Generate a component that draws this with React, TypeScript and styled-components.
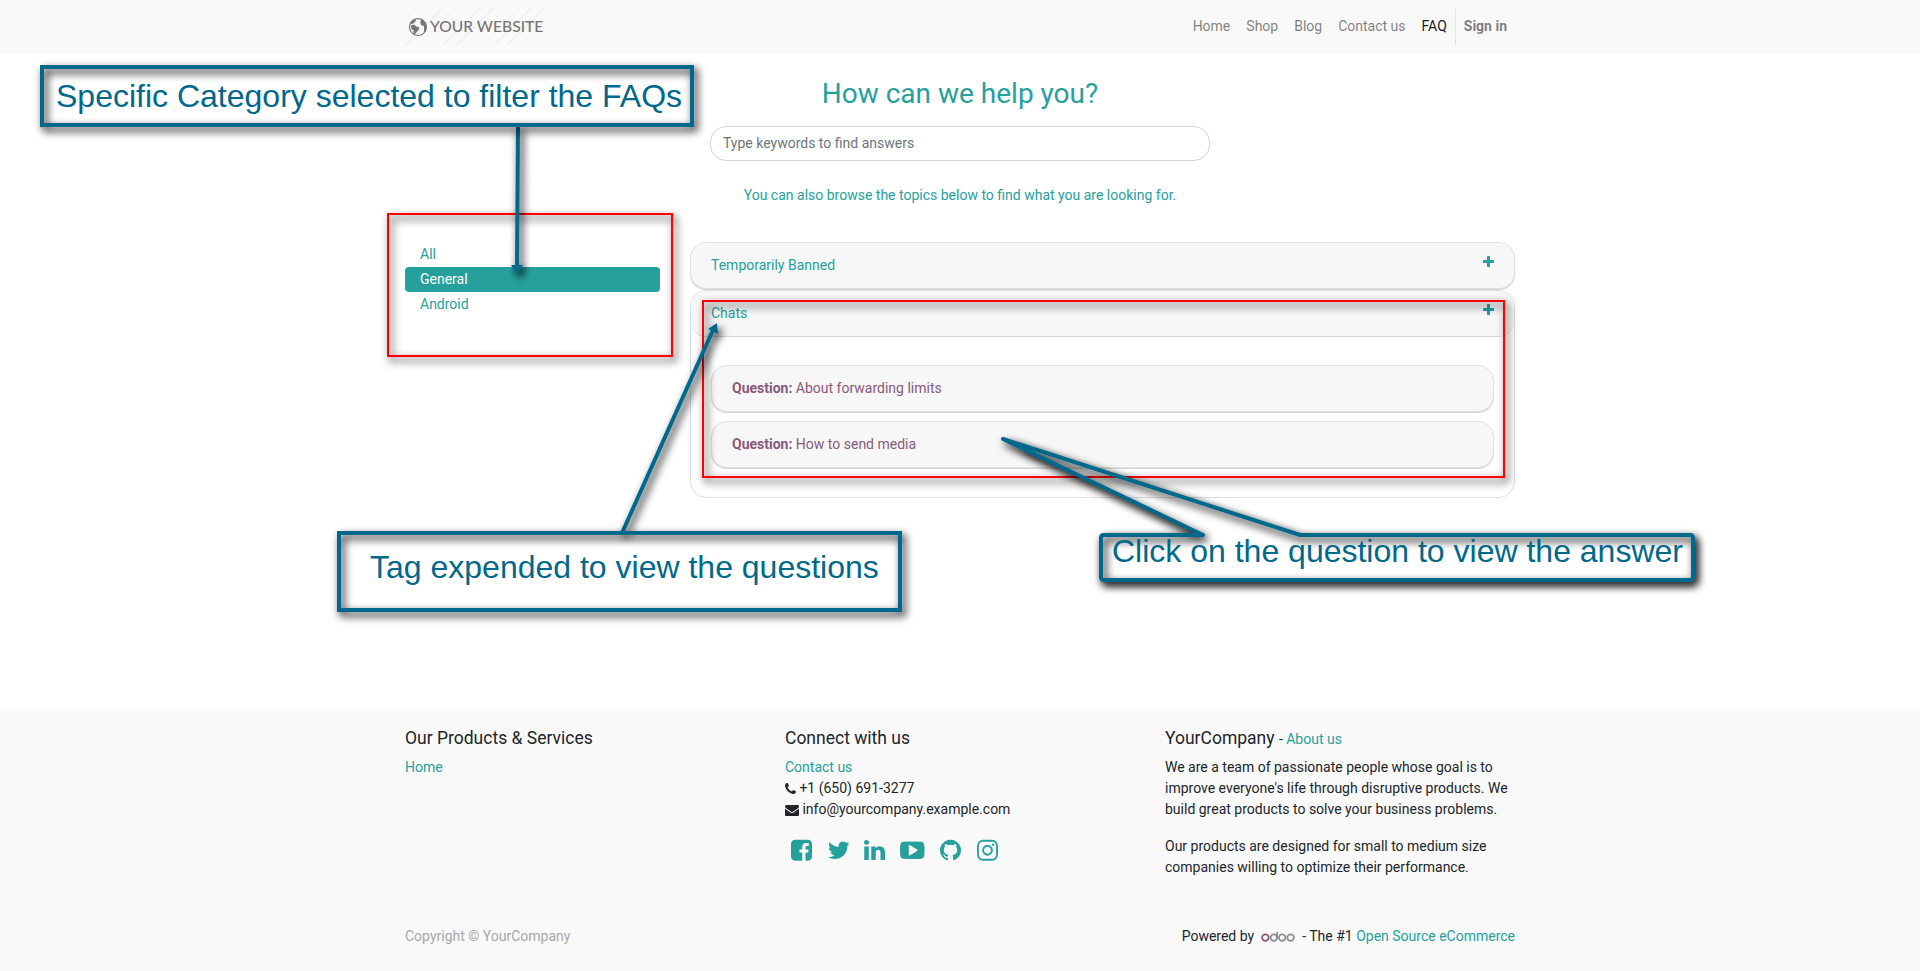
import React from "react";
import styled, { createGlobalStyle } from "styled-components";
import { ImEarth } from "react-icons/im";

const teal = "#26a09d";
const ink = "#00688b";

const GlobalStyle = createGlobalStyle`
  *, *::before, *::after { box-sizing: border-box; }
  body {
    margin: 0;
    background: #fff;
    color: #212529;
    font: 14px/21px Roboto, sans-serif;
  }
  a { color: ${teal}; text-decoration: none; }
  p { margin: 0; }
`;

const Page = styled.div`
  position: relative;
  width: 1920px;
  height: 971px;
  overflow: hidden;
  display: flex;
  flex-direction: column;
`;

const Container = styled.div`
  width: 1110px;
  margin: 0 auto;
`;

const Header = styled.header`
  height: 53px;
  background: #f9f9f9;
`;

const HeaderRow = styled(Container)`
  height: 53px;
  padding: 8px 0;
  display: flex;
  justify-content: space-between;
`;

const Logo = styled.a`
  display: flex;
  align-items: center;
  gap: 3px;
  width: 139px;
  height: 37px;
  padding-left: 4px;
  background: repeating-linear-gradient(
    135deg,
    transparent 0 8px,
    #f0f0f0 8px 9px
  );
  color: #757575;
  font: 500 15.6px/37px Lato, sans-serif;
  white-space: nowrap;
  svg { flex: none; }
`;

const Nav = styled.nav`
  display: flex;
`;

const NavLink = styled.a<{ $active?: boolean; $strong?: boolean }>`
  padding: 0 8px;
  line-height: 37px;
  color: ${(p) => (p.$active ? "rgba(0,0,0,.9)" : "rgba(0,0,0,.5)")};
  font-weight: ${(p) => (p.$strong ? 700 : 400)};
  border-left: ${(p) => (p.$strong ? "1px solid #e4e4e4" : "0")};
`;

const Main = styled.main`
  height: 658px;
  padding-top: 24px;
`;

const Hero = styled.section`
  display: flex;
  flex-direction: column;
  align-items: center;
  color: ${teal};
`;

const Title = styled.h2`
  margin: 0 0 15px;
  font-size: 28px;
  font-weight: 400;
  line-height: 34px;
`;

const Search = styled.input`
  width: 500px;
  height: 35px;
  margin-bottom: 24px;
  padding: 0 12px 2px;
  border: 1px solid #ced4da;
  border-radius: 16px;
  background: #fff;
  font: 14px/21px Roboto, sans-serif;
  &::placeholder { color: #6c757d; opacity: 1; }
`;

const Columns = styled(Container)`
  display: flex;
  align-items: flex-start;
  justify-content: space-between;
  margin-top: 36px;
`;

const Categories = styled.nav`
  display: flex;
  flex-direction: column;
  width: 255px;
`;

const Category = styled.a<{ $active?: boolean }>`
  height: 25px;
  padding: 0 15px;
  line-height: 24px;
  border-radius: 4px;
  color: ${(p) => (p.$active ? "#fff" : teal)};
  background: ${(p) => (p.$active ? teal : "transparent")};
`;

const Topics = styled.div`
  display: flex;
  flex-direction: column;
  gap: 1px;
  width: 825px;
`;

const Topic = styled.section<{ $open?: boolean }>`
  border: 1px solid #dfdfdf;
  border-radius: 16px;
  height: ${(p) => (p.$open ? "208px" : "47px")};
  background: ${(p) => (p.$open ? "#fff" : "#f7f7f7")};
  box-shadow: ${(p) => (p.$open ? "none" : "0 1px 1px rgba(0,0,0,.18)")};
`;

const TopicHead = styled.div<{ $open?: boolean }>`
  display: flex;
  justify-content: space-between;
  height: ${(p) => (p.$open ? "46px" : "45px")};
  padding: 12px 20px;
  border-radius: 15px;
  border-bottom: ${(p) => (p.$open ? "1px solid #d8d8d8" : "0")};
  background: #f7f7f7;
  color: ${teal};
`;

const Questions = styled.div`
  display: flex;
  flex-direction: column;
  gap: 9px;
  padding: 28px 20px;
`;

const Question = styled.div`
  height: 47px;
  padding: 12px 20px;
  border: 1px solid #dfdfdf;
  border-radius: 16px;
  background: #f7f7f7;
  box-shadow: 0 1px 1px rgba(0, 0, 0, 0.18);
  color: #875a7b;
`;

const Footer = styled.footer`
  flex: 1;
  background: #f9f9f9;
`;

const FooterGrid = styled(Container)`
  display: grid;
  grid-template-columns: 380px 380px 350px;
  height: 215px;
  padding-top: 17px;
`;

const FooterTitle = styled.h5`
  height: 21px;
  margin: 0 0 8px;
  font-size: 17.5px;
  font-weight: 400;
  line-height: 21px;
  small {
    font-size: 14px;
    line-height: 14px;
  }
`;

const Paragraph = styled.p`
  margin-bottom: 16px;
  white-space: nowrap;
`;

const Contact = styled.div`
  display: flex;
  align-items: center;
  gap: 3.4px;
  height: 21px;
`;

const Socials = styled.div`
  display: flex;
  align-items: center;
  margin-top: 18px;
  padding-left: 6px;
  color: ${teal};
`;

const Bottom = styled(Container)`
  display: flex;
  justify-content: space-between;
`;

const Copyright = styled.span`
  color: #a6a8aa;
`;

const Powered = styled.div`
  display: flex;
  align-items: center;
  white-space: pre;
`;

const Brand = styled.svg`
  margin: 0 7px 1px 7px;
`;

const Glyph = styled.svg<{ $after?: number }>`
  display: block;
  flex: none;
  fill: currentColor;
  margin-right: ${(p) => p.$after ?? 0}px;
`;

/* Annotation layer drawn over the page */
const Layer = styled.svg`
  position: absolute;
  inset: 0;
  pointer-events: none;
`;

const shadow = "drop-shadow(3px 4px 4.5px #000)";

const Frame = styled.div<{ $x: number; $y: number; $w: number; $h: number }>`
  position: absolute;
  left: ${(p) => p.$x}px;
  top: ${(p) => p.$y}px;
  width: ${(p) => p.$w}px;
  height: ${(p) => p.$h}px;
  border: 2px solid #f00;
  filter: ${shadow};
`;

const Note = styled.div<{ $x: number; $y: number; $w: number; $h: number; $pad: number; $line: number; $bare?: boolean }>`
  position: absolute;
  left: ${(p) => p.$x}px;
  top: ${(p) => p.$y}px;
  width: ${(p) => p.$w}px;
  height: ${(p) => p.$h}px;
  padding-left: ${(p) => p.$pad}px;
  color: ${ink};
  font: 32px/${(p) => p.$line}px "Liberation Sans", Arial, sans-serif;
  white-space: nowrap;
  &::before {
    content: "";
    position: absolute;
    inset: 0;
    border: ${(p) => (p.$bare ? "0" : `4px solid ${ink}`)};
    filter: ${shadow};
  }
`;

const glyphs = {
  plus: "M1600 736v192q0 40-28 68t-68 28h-416v416q0 40-28 68t-68 28h-192q-40 0-68-28t-28-68v-416h-416q-40 0-68-28t-28-68v-192q0-40 28-68t68-28h416v-416q0-40 28-68t68-28h192q40 0 68 28t28 68v416h416q40 0 68 28t28 68z",
  phone: "M1600 1240q0 27-10 70.5t-21 68.5q-21 50-122 106-94 51-186 51-27 0-53-3.5t-57.5-12.5-47-14.5-55.5-20.5-49-18q-98-35-175-83-127-79-264-216t-216-264q-48-77-83-175-3-9-18-49t-20.5-55.5-14.5-47-12.5-57.5-3.5-53q0-92 51-186 56-101 106-122 25-11 68.5-21t70.5-10q14 0 21 3 18 6 53 76 11 19 30 54t35 63.5 31 53.5q3 4 17.5 25t21.5 35.5 7 28.5q0 20-28.5 50t-62 55-62 53-28.5 46q0 9 5 22.5t8.5 20.5 14 24 11.5 19q76 137 174 235t235 174q2 1 19 11.5t24 14 20.5 8.5 22.5 5q18 0 46-28.5t53-62 55-62 50-28.5q14 0 28.5 7t35.5 21.5 25 17.5q25 15 53.5 31t63.5 35 54 30q70 35 76 53 3 7 3 21z",
  mail: "M1792 710v794q0 66-47 113t-113 47h-1472q-66 0-113-47t-47-113v-794q44 49 101 87 362 246 497 345 57 42 92.5 65.5t94.5 48 110 24.5h2q51 0 110-24.5t94.5-48 92.5-65.5q170-123 498-345 57-39 100-87zm0-294q0 79-49 151t-122 123q-376 261-468 325-10 7-42.5 31t-54 38.5-52 32.5-57.5 27-50 9h-2q-23 0-50-9t-57.5-27-52-32.5-54-38.5-42.5-31q-91-64-262-182.5t-205-142.5q-62-42-117-115.5t-55-136.5q0-78 41.5-130t118.5-52h1472q65 0 112.5 47t47.5 113z",
  facebook: "M1376 128q119 0 203.5 84.5t84.5 203.5v960q0 119-84.5 203.5t-203.5 84.5h-188v-595h199l30-232h-229v-148q0-56 23.5-84t91.5-28l122-1v-207q-63-9-178-9-136 0-217.5 80t-81.5 226v171h-200v232h200v595h-532q-119 0-203.5-84.5t-84.5-203.5v-960q0-119 84.5-203.5t203.5-84.5h960z",
  twitter: "M1684 408q-67 98-162 167 1 14 1 42 0 130-38 259.5t-115.5 248.5-184.5 210.5-258 146-323 54.5q-271 0-496-145 35 4 78 4 225 0 401-138-105-2-188-64.5t-114-159.5q33 5 61 5 43 0 85-11-112-23-185.5-111.5t-73.5-205.5v-4q68 38 146 41-66-44-105-115t-39-154q0-88 44-163 121 149 294.5 238.5t371.5 99.5q-8-38-8-74 0-134 94.5-228.5t228.5-94.5q140 0 236 102 109-21 205-78-37 115-142 178 93-10 186-50z",
  linkedin: "M477 625v991h-330v-991h330zm21-306q1 73-50.5 122t-135.5 49h-2q-82 0-132-49t-50-122q0-74 51.5-122.5t134.5-48.5 133 48.5 51 122.5zm1166 729v568h-329v-530q0-105-40.5-164.5t-126.5-59.5q-63 0-105.5 34.5t-63.5 85.5q-11 30-11 81v553h-329q2-399 2-647t-1-296l-1-48h329v144h-2q20-32 41-56t56.5-52 87-43.5 114.5-15.5q171 0 275 113.5t104 332.5z",
  youtube: "M1280 896q0-37-30-54l-512-320q-31-20-65-2-33 18-33 56v640q0 38 33 56 16 8 31 8 20 0 34-10l512-320q30-17 30-54zm512 0q0 96-1 150t-8.5 136.5-22.5 147.5q-16 73-69 123t-124 58q-222 25-671 25t-671-25q-71-8-124.5-58t-69.5-123q-14-65-21.5-147.5t-8.5-136.5-1-150 1-150 8.5-136.5 22.5-147.5q16-73 69-123t124-58q222-25 671-25t671 25q71 8 124.5 58t69.5 123q14 65 21.5 147.5t8.5 136.5 1 150z",
  github: "M896 128q209 0 385.5 103t279.5 279.5 103 385.5q0 251-146.5 451.5t-378.5 277.5q-27 5-40-7t-13-30q0-3 .5-76.5t.5-134.5q0-97-52-142 57-6 102.5-18t94-39 81-66.5 53-105 20.5-150.5q0-119-79-206 37-91-8-204-28-9-81 11t-92 44l-38 24q-93-26-192-26t-192 26q-16-11-42.5-27t-83.5-38.5-85-13.5q-45 113-8 204-79 87-79 206 0 85 20.5 150t52.5 105 80.5 67 94 39 102.5 18q-39 36-49 103-21 10-45 15t-57 5-65.5-21.5-55.5-62.5q-19-32-48.5-52t-49.5-24l-20-3q-21 0-29 4.5t-5 11.5 9 14 13 12l7 5q22 10 43.5 38t31.5 51l10 23q13 38 44 61.5t67 30 69.5 7 55.5-3.5l23-4q0 38 .5 88.5t.5 54.5q0 18-13 30t-40 7q-232-77-378.5-277.5t-146.5-451.5q0-209 103-385.5t279.5-279.5 385.5-103z",
  instagram: "M1152 896q0-106-75-181t-181-75-181 75-75 181 75 181 181 75 181-75 75-181zm138 0q0 164-115 279t-279 115-279-115-115-279 115-279 279-115 279 115 115 279zm108-410q0 38-27 65t-65 27-65-27-27-65 27-65 65-27 65 27 27 65zm-502-220q-7 0-76.5-.5t-105.5 0-96.5 3-103 10-71.5 18.5q-50 20-88 58t-58 88q-11 29-18.5 71.5t-10 103-3 96.5 0 105.5.5 76.5-.5 76.5 0 105.5 3 96.5 10 103 18.5 71.5q20 50 58 88t88 58q29 11 71.5 18.5t103 10 96.5 3 105.5 0 76.5-.5 76.5.5 105.5 0 96.5-3 103-10 71.5-18.5q50-20 88-58t58-88q11-29 18.5-71.5t10-103 3-96.5 0-105.5-.5-76.5.5-76.5 0-105.5-3-96.5-10-103-18.5-71.5q-20-50-58-88t-88-58q-29-11-71.5-18.5t-103-10-96.5-3-105.5 0-76.5.5zm768 630q0 229-5 317-10 208-124 322t-322 124q-88 5-317 5t-317-5q-208-10-322-124t-124-322q-5-88-5-317t5-317q10-208 124-322t322-124q88-5 317-5t317 5q208 10 322 124t124 322q5 88 5 317z",
};

/* Icons share a 1792-unit em; x and w trim the side bearings */
function Icon({ name, em, x = 0, w = 1792, after }: { name: keyof typeof glyphs; em: number; x?: number; w?: number; after?: number }) {
  return (
    <Glyph width={(w / 1792) * em} height={em} viewBox={`${x} 0 ${w} 1792`} $after={after}>
      <path d={glyphs[name]} />
    </Glyph>
  );
}

const socials: { name: keyof typeof glyphs; x: number; w: number; after: number }[] = [
  { name: "facebook", x: 128, w: 1536, after: 15.5 },
  { name: "twitter", x: 108, w: 1576, after: 15 },
  { name: "linkedin", x: 128, w: 1536, after: 15.3 },
  { name: "youtube", x: 0, w: 1792, after: 15.3 },
  { name: "github", x: 128, w: 1536, after: 15.5 },
  { name: "instagram", x: 128, w: 1536, after: 0 },
];

const balloon =
  "M1104 535H1203L1003 439L1300 535H1690q3 0 3 3V577q0 3-3 3H1104q-3 0-3-3V538q0-3 3-3z";

export default function App() {
  return (
    <Page>
      <GlobalStyle />
      <Header>
        <HeaderRow>
          <Logo>
            <ImEarth size={18} />
            YOUR WEBSITE
          </Logo>
          <Nav>
            <NavLink>Home</NavLink>
            <NavLink>Shop</NavLink>
            <NavLink>Blog</NavLink>
            <NavLink>Contact us</NavLink>
            <NavLink $active>FAQ</NavLink>
            <NavLink $strong>Sign in</NavLink>
          </Nav>
        </HeaderRow>
      </Header>

      <Main>
        <Hero>
          <Title>How can we help you?</Title>
          <Search placeholder="Type keywords to find answers" />
          <p>You can also browse the topics below to find what you are looking for.</p>
        </Hero>
        <Columns>
          <Categories>
            <Category>All</Category>
            <Category $active>General</Category>
            <Category>Android</Category>
          </Categories>
          <Topics>
            <Topic>
              <TopicHead>
                Temporarily Banned
                <Icon name="plus" em={14} x={192} w={1408} />
              </TopicHead>
            </Topic>
            <Topic $open>
              <TopicHead $open>
                Chats
                <Icon name="plus" em={14} x={192} w={1408} />
              </TopicHead>
              <Questions>
                <Question>
                  <b>Question:</b> About forwarding limits
                </Question>
                <Question>
                  <b>Question:</b> How to send media
                </Question>
              </Questions>
            </Topic>
          </Topics>
        </Columns>
      </Main>

      <Footer>
        <FooterGrid>
          <div>
            <FooterTitle>Our Products &amp; Services</FooterTitle>
            <a>Home</a>
          </div>
          <div>
            <FooterTitle>Connect with us</FooterTitle>
            <a>Contact us</a>
            <Contact>
              <Icon name="phone" em={14} x={192} w={1408} />
              +1 (650) 691-3277
            </Contact>
            <Contact>
              <Icon name="mail" em={14} />
              info@yourcompany.example.com
            </Contact>
            <Socials>
              {socials.map((s) => (
                <Icon key={s.name} em={24.5} {...s} />
              ))}
            </Socials>
          </div>
          <div>
            <FooterTitle>
              YourCompany <small>- <a>About us</a></small>
            </FooterTitle>
            <Paragraph>
              We are a team of passionate people whose goal is to
              <br />
              improve everyone's life through disruptive products. We
              <br />
              build great products to solve your business problems.
            </Paragraph>
            <Paragraph>
              Our products are designed for small to medium size
              <br />
              companies willing to optimize their performance.
            </Paragraph>
          </div>
        </FooterGrid>
        <Bottom>
          <Copyright>Copyright © YourCompany</Copyright>
          <Powered>
            Powered by
            <Brand width="34" height="13" viewBox="0 0 34 13" fill="none" stroke="#8f8f8f" strokeWidth="1.8" role="img" aria-label="odoo">
              <circle cx="4.4" cy="7.6" r="3.3" stroke="#875a7b" />
              <circle cx="12.8" cy="7.6" r="3.3" />
              <path d="M16.1 2v5.8" />
              <circle cx="21.2" cy="7.6" r="3.3" />
              <circle cx="29.6" cy="7.6" r="3.3" />
            </Brand>
            - The #1 <a>Open Source eCommerce</a>
          </Powered>
        </Bottom>
      </Footer>

      <Frame $x={387} $y={213} $w={286} $h={144} />
      <Frame $x={702} $y={300} $w={803} $h={178} />
      <Layer width="1920" height="971" viewBox="0 0 1920 971">
        <defs>
          <filter id="soft" filterUnits="userSpaceOnUse" x="0" y="0" width="1920" height="971">
            <feDropShadow dx="3" dy="4" stdDeviation="4.5" floodColor="#000" />
          </filter>
          <clipPath id="outside">
            <path clipRule="evenodd" d={`M0 0H1920V971H0z${balloon}`} />
          </clipPath>
        </defs>
        <g filter="url(#soft)" stroke={ink} strokeWidth="4" fill={ink}>
          <path d="M518 126L517 266" />
          <path stroke="none" d="M511 265h12l-6 9z" />
        </g>
        <g filter="url(#soft)" stroke={ink} strokeWidth="4" fill={ink}>
          <path d="M622 533L713 330" />
          <path stroke="none" d="M717 323l1 11-10-5z" />
        </g>
        {/* a filled balloon casts the darker outer shadow, its outline the lighter inner one */}
        <g clipPath="url(#outside)">
          <path filter="url(#soft)" fill={ink} d={balloon} />
        </g>
        <path
          filter="url(#soft)"
          fill="none"
          stroke={ink}
          strokeWidth="4"
          strokeLinejoin="round"
          d={balloon}
        />
      </Layer>
      <Note $x={40} $y={65} $w={654} $h={62} $pad={16} $line={62}>
        Specific Category selected to filter the FAQs
      </Note>
      <Note $x={337} $y={531} $w={565} $h={81} $pad={33} $line={73}>
        Tag expended to view the questions
      </Note>
      <Note $x={1099} $y={533} $w={596} $h={49} $pad={13} $line={36} $bare>
        Click on the question to view the answer
      </Note>
    </Page>
  );
}
